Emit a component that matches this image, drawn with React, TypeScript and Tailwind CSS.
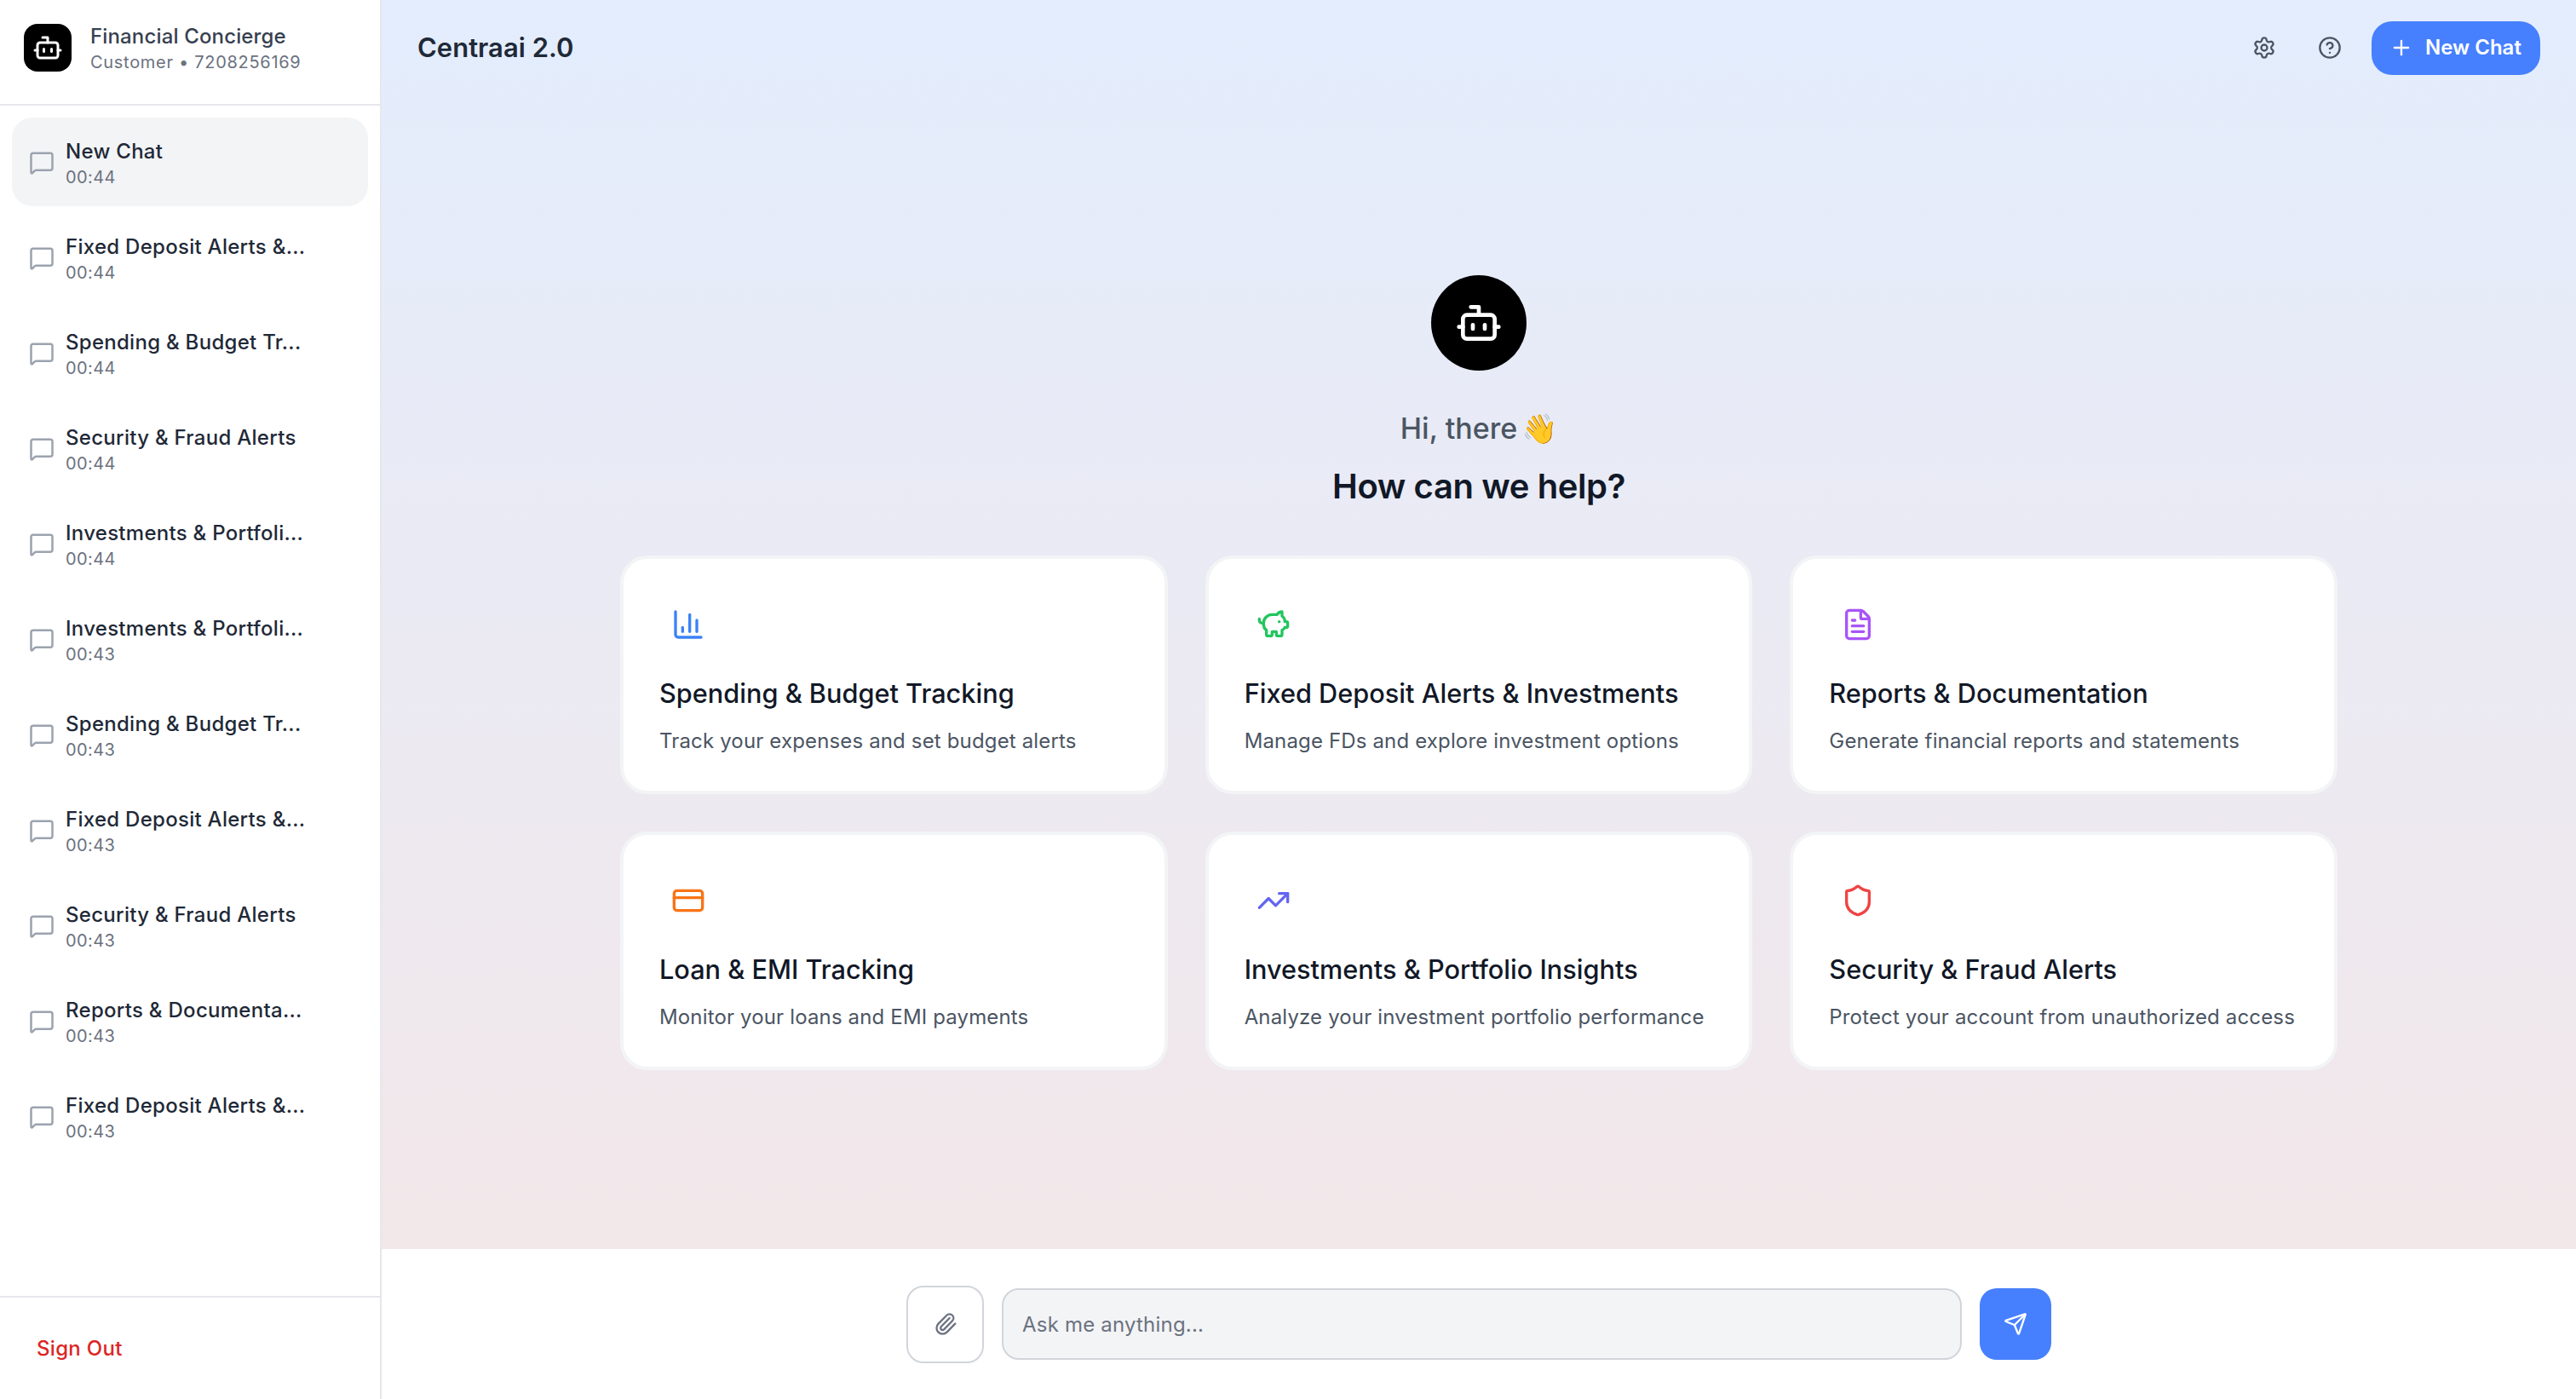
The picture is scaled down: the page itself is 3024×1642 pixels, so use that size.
import {
  Bot,
  ChartColumn,
  CircleHelp,
  CreditCard,
  FileText,
  MessageSquare,
  Paperclip,
  PiggyBank,
  Plus,
  Send,
  Settings,
  Shield,
  TrendingUp,
} from "lucide-react";

const chats = [
  { title: "New Chat", time: "00:44", active: true },
  { title: "Fixed Deposit Alerts &...", time: "00:44" },
  { title: "Spending & Budget Tr...", time: "00:44" },
  { title: "Security & Fraud Alerts", time: "00:44" },
  { title: "Investments & Portfoli...", time: "00:44" },
  { title: "Investments & Portfoli...", time: "00:43" },
  { title: "Spending & Budget Tr...", time: "00:43" },
  { title: "Fixed Deposit Alerts &...", time: "00:43" },
  { title: "Security & Fraud Alerts", time: "00:43" },
  { title: "Reports & Documenta...", time: "00:43" },
  { title: "Fixed Deposit Alerts &...", time: "00:43" },
];

const cards = [
  {
    icon: <ChartColumn size={40} className="text-[#3b82f6]" />,
    title: "Spending & Budget Tracking",
    text: "Track your expenses and set budget alerts",
  },
  {
    icon: <PiggyBank size={40} className="text-[#22c55e]" />,
    title: "Fixed Deposit Alerts & Investments",
    text: "Manage FDs and explore investment options",
  },
  {
    icon: <FileText size={40} className="text-[#a855f7]" />,
    title: "Reports & Documentation",
    text: "Generate financial reports and statements",
  },
  {
    icon: <CreditCard size={40} className="text-[#f97316]" />,
    title: "Loan & EMI Tracking",
    text: "Monitor your loans and EMI payments",
  },
  {
    icon: <TrendingUp size={40} className="text-[#6366f1]" />,
    title: "Investments & Portfolio Insights",
    text: "Analyze your investment portfolio performance",
  },
  {
    icon: <Shield size={40} className="text-[#ef4444]" />,
    title: "Security & Fraud Alerts",
    text: "Protect your account from unauthorized access",
  },
];

const Sidebar = () => (
  <aside className="flex h-full w-[448px] shrink-0 flex-col border-r-2 border-[#e5e7eb] bg-white">
    <div className="h-[124px] shrink-0 border-b-2 border-[#e5e7eb] px-[28px] pt-[28px]">
      <div className="flex h-[56px] items-center gap-[22px]">
        <div className="flex size-[56px] items-center justify-center rounded-[16px] bg-black">
          <Bot size={36} className="text-white" />
        </div>
        <div className="mt-[2px] flex flex-col">
          <span className="text-[24px] leading-[32px] font-medium tracking-[0.15px] text-[#374151]">
            Financial Concierge
          </span>
          <span className="text-[20px] leading-[28px] tracking-[0.7px] text-[#6b7280]">Customer • 7208256169</span>
        </div>
      </div>
    </div>
    <div className="flex flex-1 flex-col gap-[8px] p-[14px]">
      {chats.map((chat, index) => (
        <div
          key={index}
          className={`flex h-[104px] shrink-0 items-center gap-[13px] rounded-[24px] pl-[20px] ${
            chat.active ? "bg-[#f3f4f6]" : ""
          }`}
        >
          <MessageSquare size={30} className="mt-[1px] text-[#9ca3af]" />
          <div className="mt-[3px] flex flex-col">
            <span className="text-[24px] leading-[32px] font-medium tracking-[0.28px] text-[#1f2937]">
              {chat.title}
            </span>
            <span className="text-[20px] leading-[28px] tracking-[0.4px] text-[#6b7280]">{chat.time}</span>
          </div>
        </div>
      ))}
    </div>
    <div className="flex h-[121px] shrink-0 items-center border-t-2 border-[#e5e7eb] px-[43px]">
      <span className="text-[24px] font-medium tracking-[0.3px] text-[#dc2626]">Sign Out</span>
    </div>
  </aside>
);

const TopBar = () => (
  <header className="flex h-[112px] shrink-0 items-center justify-between px-[42px]">
    <h1 className="text-[31px] font-semibold text-[#1f2937]">Centraai 2.0</h1>
    <div className="flex items-center">
      <Settings size={28} className="text-[#4b5563]" />
      <CircleHelp size={28} className="ml-[49px] text-[#4b5563]" />
      <button className="ml-[35px] flex h-[63px] w-[198px] items-center gap-[14px] rounded-[24px] bg-[#4680ff] pl-[21px] text-[24px] font-semibold text-white">
        <Plus size={28} />
        New Chat
      </button>
    </div>
  </header>
);

const Hero = () => (
  <section className="flex flex-1 flex-col items-center justify-center">
    <div className="flex size-[112px] items-center justify-center rounded-full bg-black">
      <Bot size={56} className="text-white" />
    </div>
    <p className="mt-[44px] text-[34px] leading-[48px] font-medium text-[#4b5563]">
      Hi, there <span className="ml-[-4px]">👋</span>
    </p>
    <h2 className="mt-[16px] text-[40px] leading-[56px] font-semibold tracking-[-0.4px] text-[#111827]">
      How can we help?
    </h2>
    <div className="mt-[53px] grid w-[2016px] grid-cols-3 gap-[44px]">
      {cards.map((card) => (
        <div key={card.title} className="h-[280px] rounded-[32px] border-4 border-[#f3f4f6] bg-white pt-[43px] pl-[42px]">
          <div className="mb-[25px] w-fit p-[14px]">{card.icon}</div>
          <h3 className="text-[30.7px] leading-[44px] font-medium text-[#111827]">{card.title}</h3>
          <p className="mt-[16px] text-[24px] leading-[36px] tracking-[0.15px] text-[#4b5563]">{card.text}</p>
        </div>
      ))}
    </div>
  </section>
);

const Composer = () => (
  <footer className="flex h-[176px] shrink-0 items-center justify-center gap-[21px] bg-white">
    <button className="flex size-[91px] items-center justify-center rounded-[20px] border-2 border-[#d1d5db] bg-white">
      <Paperclip size={28} className="text-[#6b7280]" />
    </button>
    <input
      placeholder="Ask me anything..."
      className="h-[84px] w-[1127px] rounded-[20px] border-2 border-[#d1d5db] bg-[#f3f4f6] px-[22px] text-[24px] tracking-[0.2px] outline-none placeholder:text-[#6b7280]"
    />
    <button className="flex size-[84px] items-center justify-center rounded-[20px] bg-[#4680ff]">
      <Send size={28} className="text-white" />
    </button>
  </footer>
);

export default function App() {
  return (
    <div className="flex h-screen w-full overflow-hidden bg-white font-[Inter,sans-serif]">
      <Sidebar />
      <main className="flex h-full flex-1 flex-col">
        <div className="flex flex-1 flex-col bg-gradient-to-b from-[#e3edfd] to-[#f2e7e9]">
          <TopBar />
          <Hero />
        </div>
        <Composer />
      </main>
    </div>
  );
}
